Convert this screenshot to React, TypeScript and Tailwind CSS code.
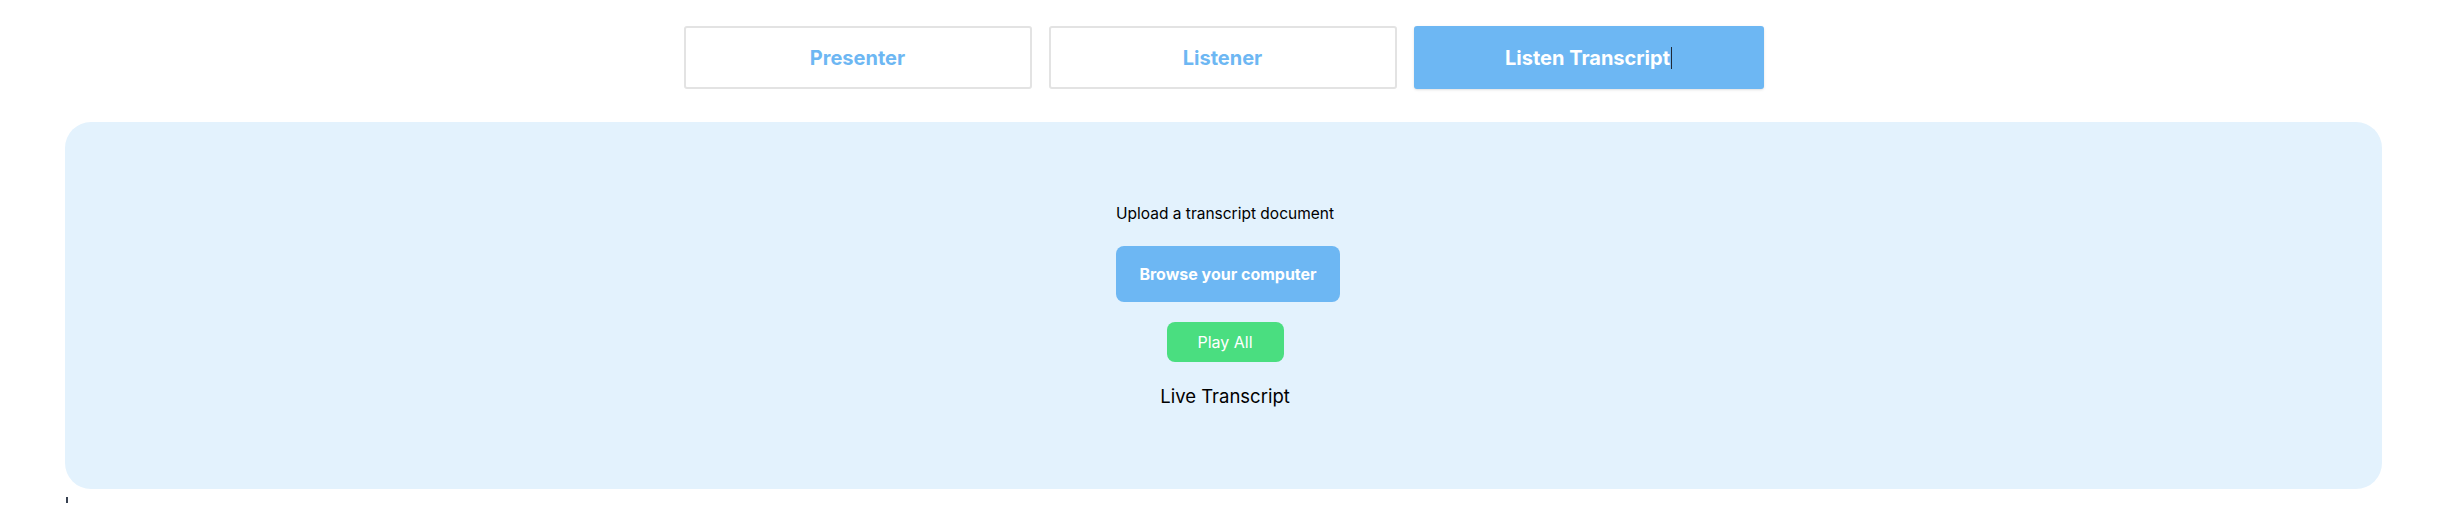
import { ReactNode } from 'react';

const font = { fontFamily: 'Inter, "Noto Sans", sans-serif' };

interface TabProps {
  label: string;
  active?: boolean;
  children?: ReactNode;
}

function Tab({ label, active, children }: TabProps) {
  return (
    <button
      className={
        active
          ? 'w-[350px] h-[63px] rounded-[3px] bg-[#6db7f3] text-white text-[20px] font-bold flex items-center justify-center shadow-sm'
          : 'w-[348px] h-[63px] rounded-[3px] bg-white border-2 border-[#e3e3e3] text-[#6db7f3] text-[20px] font-bold flex items-center justify-center'
      }
    >
      {label}
      {children}
    </button>
  );
}

export default function App() {
  return (
    <div className="min-h-[522px] bg-white text-black" style={font}>
      <div className="ml-[65px] mr-[56px] pt-[26px]">
        <div className="flex justify-center gap-[17px]">
          <Tab label="Presenter" />
          <Tab label="Listener" />
          <Tab label="Listen Transcript" active>
            <span className="inline-block w-[1px] h-[22px] bg-[#1f2937] ml-[1px]" />
          </Tab>
        </div>

        <div className="mt-[33px] rounded-[26px] bg-[#e3f2fd] pt-[80px] pb-[79px] pl-[3px] flex flex-col items-center gap-5">
          <p className="text-[15.5px] leading-6">Upload a transcript document</p>
          <button className="ml-[6px] w-[224px] h-[56px] rounded-lg bg-[#6db7f3] text-white text-[16px] font-bold">
            Browse your computer
          </button>
          <button className="w-[117px] h-[40px] rounded-lg bg-[#4ade80] text-white text-[16px]">
            Play All
          </button>
          <p className="text-[18.5px] leading-7">Live Transcript</p>
        </div>

        <div className="mt-[8px] ml-[1px] w-[2px] h-[6px] bg-[#374151]" />
      </div>
    </div>
  );
}
